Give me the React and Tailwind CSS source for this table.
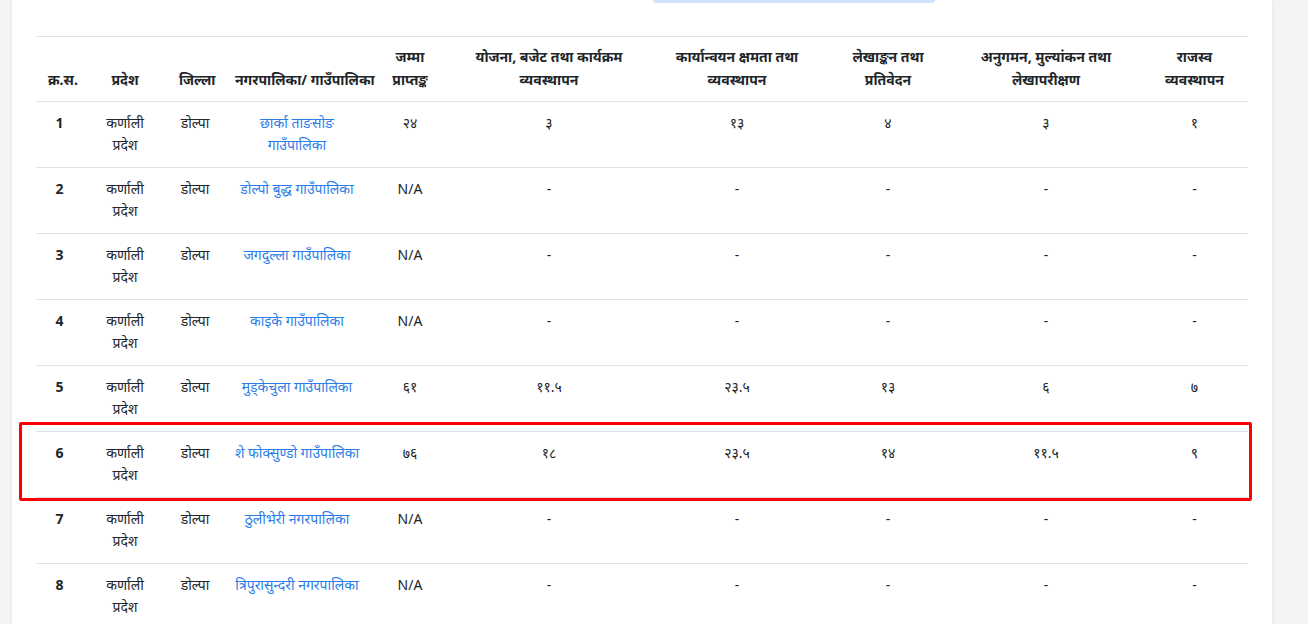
import React from 'react';

const headers = [
    ['क्र.स.'],
    ['प्रदेश'],
    ['जिल्ला'],
    ['नगरपालिका/ गाउँपालिका'],
    ['जम्मा', 'प्राप्तङ्क'],
    ['योजना, बजेट तथा कार्यक्रम', 'व्यवस्थापन'],
    ['कार्यान्वयन क्षमता तथा', 'व्यवस्थापन'],
    ['लेखाङ्कन तथा', 'प्रतिवेदन'],
    ['अनुगमन, मुल्यांकन तथा', 'लेखापरीक्षण'],
    ['राजस्व', 'व्यवस्थापन'],
];

const widths = ['w-[47px]', 'w-[84px]', 'w-[56px]', 'w-[148px]', 'w-[78px]', 'w-[200px]', 'w-[176px]', 'w-[126px]', 'w-[190px]', 'w-[107px]'];

const rows = [
    { n: 1, name: ['छार्का ताङसोङ', 'गाउँपालिका'], scores: ['२४', '३', '१३', '४', '३', '१'] },
    { n: 2, name: ['डोल्पो बुद्ध गाउँपालिका'], scores: ['N/A', '-', '-', '-', '-', '-'] },
    { n: 3, name: ['जगदुल्ला गाउँपालिका'], scores: ['N/A', '-', '-', '-', '-', '-'] },
    { n: 4, name: ['काइके गाउँपालिका'], scores: ['N/A', '-', '-', '-', '-', '-'] },
    { n: 5, name: ['मुड्केचुला गाउँपालिका'], scores: ['६१', '११.५', '२३.५', '१३', '६', '७'] },
    { n: 6, name: ['शे फोक्सुण्डो गाउँपालिका'], scores: ['७६', '१८', '२३.५', '१४', '११.५', '९'] },
    { n: 7, name: ['ठुलीभेरी नगरपालिका'], scores: ['N/A', '-', '-', '-', '-', '-'] },
    { n: 8, name: ['त्रिपुरासुन्दरी नगरपालिका'], scores: ['N/A', '-', '-', '-', '-', '-'] },
];

const Lines = ({ parts }) =>
    parts.map((p, i) => (
        <React.Fragment key={i}>
            {i > 0 && <br />}
            {p}
        </React.Fragment>
    ));

export default function App() {
    return (
        <div className="min-h-screen bg-[#f4f4f4] pl-[12px] pr-[36px] font-['Noto_Sans','Open_Sans',sans-serif] text-[14px] leading-[22px] text-[#212529]">
            <div className="min-h-screen bg-white px-6 shadow-[0_0_4px_rgba(0,0,0,0.08)]">
                <div className="ml-[617px] h-[3px] w-[282px] rounded-b-md bg-[#cfe2ff]" />

                <div className="relative mt-[33px]">
                    <table className="w-full table-fixed border-collapse text-center">
                        <colgroup>
                            {widths.map((w, i) => (
                                <col key={i} className={w} />
                            ))}
                        </colgroup>
                        <thead>
                            <tr className="border-y border-[#dee2e6]">
                                {headers.map((h, i) => (
                                    <th key={i} className="px-3 pt-[8px] pb-[10px] align-bottom font-bold leading-[23px] whitespace-nowrap">
                                        <Lines parts={h} />
                                    </th>
                                ))}
                            </tr>
                        </thead>
                        <tbody>
                            {rows.map((r) => (
                                <tr key={r.n} className="border-b border-[#dee2e6]">
                                    <th className="px-3 pt-[10px] pb-[11px] align-top font-bold">{r.n}</th>
                                    <td className="px-3 pt-[10px] pb-[11px] align-top">
                                        कर्णाली
                                        <br />
                                        प्रदेश
                                    </td>
                                    <td className="px-2 pt-[10px] pb-[11px] align-top whitespace-nowrap">डोल्पा</td>
                                    <td className="px-2 pt-[10px] pb-[11px] align-top whitespace-nowrap">
                                        <a href="#" className="text-[#2b7de9]">
                                            <Lines parts={r.name} />
                                        </a>
                                    </td>
                                    {r.scores.map((s, i) => (
                                        <td key={i} className="px-3 pt-[10px] pb-[11px] align-top">
                                            {s}
                                        </td>
                                    ))}
                                </tr>
                            ))}
                        </tbody>
                    </table>

                    {/* highlight around row 6 */}
                    <div className="pointer-events-none absolute top-[386px] -left-[17px] h-[79px] w-[1233px] rounded-[2px] border-[3px] border-[#ff0000]" />
                </div>
            </div>
        </div>
    );
}
